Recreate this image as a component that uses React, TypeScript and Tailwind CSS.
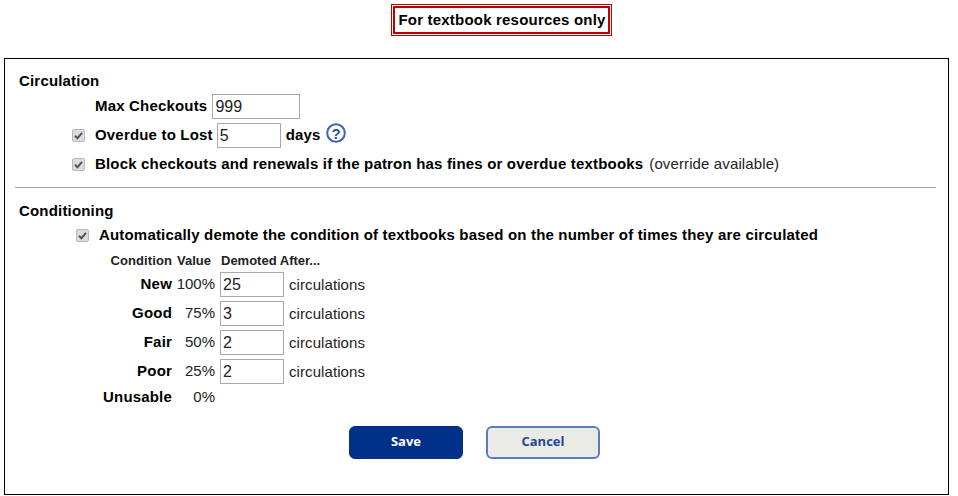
const font = "font-['Liberation_Sans',Arial,sans-serif]";

function Check() {
  return (
    <span className="flex h-[13px] w-[13px] shrink-0 items-center justify-center rounded-[2px] border border-[#b8b8b8] bg-[#dcdcdc]">
      <svg width="11" height="11" viewBox="0 0 11 11">
        <path d="M2 5.8 L4.4 8.2 L9 2.8" fill="none" stroke="#555" strokeWidth="2" />
      </svg>
    </span>
  );
}

function Field({ value, w }: { value: string; w: string }) {
  return (
    <input
      readOnly
      value={value}
      className={`${w} h-[25px] border border-[#a9a9a9] bg-white px-[2px] text-[16px] text-[#222] outline-none`}
    />
  );
}

const rows = [
  { name: "New", pct: "100%", val: "25" },
  { name: "Good", pct: "75%", val: "3" },
  { name: "Fair", pct: "50%", val: "2" },
  { name: "Poor", pct: "25%", val: "2" },
];

export default function App() {
  return (
    <div className={`${font} h-[496px] w-[958px] overflow-hidden bg-white pt-[4px] text-[15px] text-black`}>
      <div className="flex justify-center pl-[45px]">
        <div className="border border-[#c00000] p-px">
          <div className="flex h-[28px] w-[217px] items-center justify-center border-2 border-[#c00000] pl-px text-[15px] font-bold tracking-[0.2px]">
            For textbook resources only
          </div>
        </div>
      </div>

      <div className="ml-[4px] mt-[22px] h-[437px] w-[945px] border border-black pl-[10px] pr-[11px] pt-[14px]">
        <div className="pl-[4px] font-bold leading-[16px] tracking-[0.18px]">Circulation</div>

        <div className="mt-[5px] flex h-[25px] items-center pl-[80px]">
          <span className="font-bold tracking-[0.18px]">Max Checkouts</span>
          <span className="ml-[5px]"><Field value="999" w="w-[88px]" /></span>
        </div>

        <div className="mt-[4px] flex h-[25px] items-center pl-[57px]">
          <Check />
          <span className="ml-[10px] font-bold tracking-[0.18px]">Overdue to Lost</span>
          <span className="ml-[4px]"><Field value="5" w="w-[64px]" /></span>
          <span className="ml-[5px] font-bold tracking-[0.18px]">days</span>
          <svg className="mb-[5px] ml-[5px]" width="20" height="20" viewBox="0 0 20 20">
            <circle cx="10" cy="10" r="8.8" fill="#fff" stroke="#3a63b8" strokeWidth="2" />
            <text x="10" y="15.5" textAnchor="middle" fontSize="15" fontWeight="700" fill="#2a4fa8" fontFamily="Liberation Sans">?</text>
          </svg>
        </div>

        <div className="mt-[6px] flex h-[20px] items-center pl-[57px]">
          <Check />
          <span className="ml-[10px] font-bold tracking-[0.18px]">Block checkouts and renewals if the patron has fines or overdue textbooks</span>
          <span className="ml-[6px] tracking-[0.12px] text-[#222]">(override available)</span>
        </div>

        <div className="mr-[1px] mt-[13px] h-px bg-[#a0a0a0]" />

        <div className="mt-[15px] pl-[4px] font-bold leading-[16px] tracking-[0.18px]">Conditioning</div>

        <div className="mt-[6px] flex h-[20px] items-center pl-[61px]">
          <Check />
          <span className="ml-[10px] font-bold tracking-[0.18px]">Automatically demote the condition of textbooks based on the number of times they are circulated</span>
        </div>

        <div className="mt-[9px] grid grid-cols-[157px_43px_69px_auto] items-center gap-y-[4px] pr-[400px]">
          <div className="h-[14px] whitespace-nowrap text-right text-[13px] font-bold leading-[14px] tracking-[0.1px] text-[#222]">Condition</div>
          <div className="h-[14px] pl-[5px] text-[13px] font-bold leading-[14px] text-[#222]">Value</div>
          <div className="col-span-2 h-[14px] pl-[6px] text-[13px] font-bold leading-[14px] text-[#222]">Demoted After...</div>
          {rows.map((r) => (
            <div key={r.name} className="contents">
              <div className="text-right font-bold tracking-[0.18px]">{r.name}</div>
              <div className="text-right text-[#222]">{r.pct}</div>
              <div className="pl-[5px]"><Field value={r.val} w="w-[64px]" /></div>
              <div className="pl-[5px] pt-[1px] tracking-[0.08px] text-[#222]">circulations</div>
            </div>
          ))}
          <div className="-mt-[2px] text-right font-bold tracking-[0.18px]">Unusable</div>
          <div className="-mt-[2px] text-right text-[#222]">0%</div>
        </div>

        <div className="mt-[17px] flex justify-center gap-[23px] pr-[3px] font-['Open_Sans',sans-serif] text-[13px] font-bold">
          <button className="h-[33px] w-[114px] rounded-[6px] border border-[#003087] bg-[#003087] pb-px text-white">Save</button>
          <button className="h-[33px] w-[114px] rounded-[6px] border-2 border-[#5a7dbd] bg-[#ebebe6] pb-px text-[#1f4697]">Cancel</button>
        </div>
      </div>
    </div>
  );
}
